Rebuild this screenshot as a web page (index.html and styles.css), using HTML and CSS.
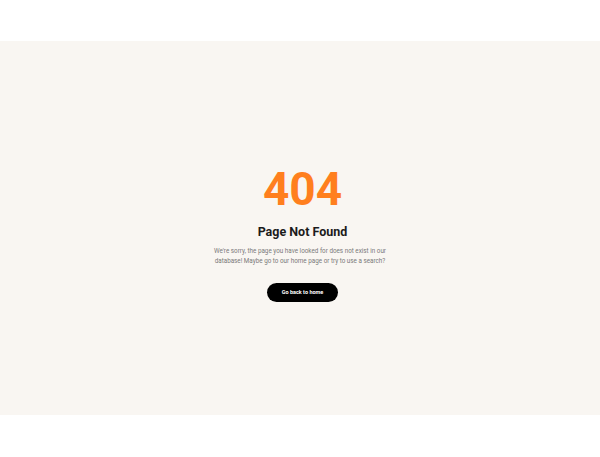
FILE: index.html
```html
<!DOCTYPE html>
<html lang="en">
<head>
    <meta charset="UTF-8">
    <meta name="viewport" content="width=device-width, initial-scale=1.0">
    <title>Page Not Found</title>
    <link rel="stylesheet" href="styles.css">
</head>
<body>

<header class="top-bar"></header>

<main class="error-section">
    <div class="error-box">
        <h1 class="error-code">404</h1>
        <h2 class="error-title">Page Not Found</h2>
        <p class="error-text">We're sorry, the page you have looked for does not exist in our database! Maybe go to our home page or try to use a search?</p>
        <a href="#" class="home-btn">Go back to home</a>
    </div>
</main>

<footer class="bottom-bar"></footer>

</body>
</html>
```

FILE: styles.css
```css
body {
    font-family: Roboto, "Liberation Sans", sans-serif;
    background-color: #fff;
    margin: 0;
}

.top-bar {
    height: 41px;
}

.error-section {
    height: 374px;
    background-color: #f9f6f2;
    display: flex;
    align-items: center;
    justify-content: center;
}

.error-box {
    display: flex;
    flex-direction: column;
    align-items: center;
    text-align: center;
    width: 180px;
    padding-left: 5px;
    margin-top: 9px;
}

.error-code {
    font-size: 46px;
    font-weight: 700;
    line-height: 52px;
    color: #ff7f1e;
    margin: 0;
}

.error-title {
    font-size: 12.5px;
    font-weight: 700;
    line-height: 16px;
    color: #1b1b1b;
    margin: 9px 0 0;
}

.error-text {
    font-size: 6.3px;
    line-height: 10px;
    color: #7a7a7a;
    margin: 6px 0 0 -5px;
}

.home-btn {
    display: block;
    width: 71px;
    height: 19px;
    line-height: 19px;
    margin-top: 17px;
    background-color: #000;
    color: #fff;
    border-radius: 10px;
    font-size: 5.5px;
    font-weight: 700;
    text-decoration: none;
}
```
